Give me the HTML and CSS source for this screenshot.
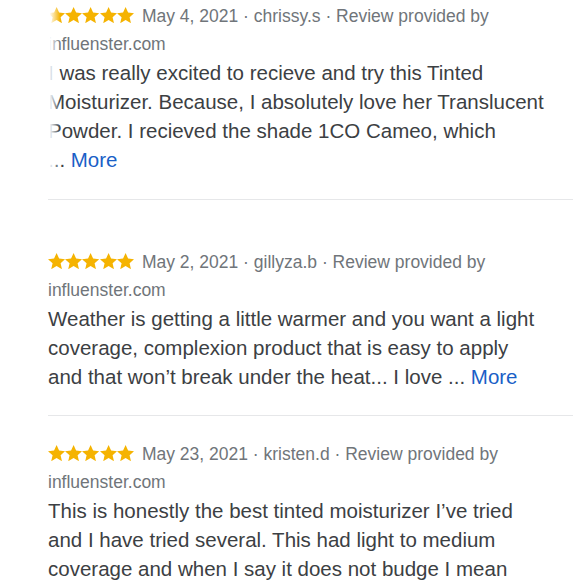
FILE: index.html
```html
<!DOCTYPE html>
<html lang="en">
<head>
<meta charset="utf-8">
<title>Reviews</title>
<link rel="stylesheet" href="styles.css">
</head>
<body>
<svg width="0" height="0" class="defs" aria-hidden="true">
  <defs>
    <symbol id="star" viewBox="1.6 1.9 20.8 19.6">
      <path d="M12 1.9l3.05 6.75 7.35.7-5.55 4.95 1.65 7.2L12 17.7l-6.5 3.8 1.65-7.2L1.6 9.35l7.35-.7z"/>
    </symbol>
  </defs>
</svg>
<main class="reviews">
  <article class="review review-first">
    <div class="meta">
      <span class="stars"><svg><use href="#star"/></svg><svg><use href="#star"/></svg><svg><use href="#star"/></svg><svg><use href="#star"/></svg><svg><use href="#star"/></svg></span>
      <span>May 4, 2021 · chrissy.s · Review provided by</span>
    </div>
    <div class="source">influenster.com</div>
    <p class="body"><span>I was really excited to recieve and try this Tinted Moisturizer. Because, I absolutely love her Translucent Powder. I recieved the shade 1CO Cameo, which</span><br><span>...</span> <a class="more" href="#">More</a></p>
    <div class="fade"></div>
  </article>
  <article class="review review-second">
    <div class="meta">
      <span class="stars"><svg><use href="#star"/></svg><svg><use href="#star"/></svg><svg><use href="#star"/></svg><svg><use href="#star"/></svg><svg><use href="#star"/></svg></span>
      <span>May 2, 2021 · gillyza.b · Review provided by</span>
    </div>
    <div class="source">influenster.com</div>
    <p class="body"><span>Weather is getting a little warmer and you want a light coverage, complexion product that is easy to apply</span><br><span>and that won’t break under the heat... I love ...</span> <a class="more" href="#">More</a></p>
  </article>
  <article class="review">
    <div class="meta">
      <span class="stars"><svg><use href="#star"/></svg><svg><use href="#star"/></svg><svg><use href="#star"/></svg><svg><use href="#star"/></svg><svg><use href="#star"/></svg></span>
      <span>May 23, 2021 · kristen.d · Review provided by</span>
    </div>
    <div class="source">influenster.com</div>
    <p class="body"><span>This is honestly the best tinted moisturizer I’ve tried and I have tried several. This had light to medium coverage and when I say it does not budge I mean</span></p>
  </article>
</main>
</body>
</html>
```
FILE: styles.css
```css
html, body {
  margin: 0;
  padding: 0;
  background: #ffffff;
}
body {
  font-family: "Liberation Sans", Arial, sans-serif;
  overflow: hidden;
  height: 580px;
}
.defs {
  position: absolute;
  width: 0;
  height: 0;
}
.reviews {
  padding: 0 7px 0 48px;
}
.review {
  position: relative;
  padding: 24px 0 24px;
  border-bottom: 1px solid #e6e7e9;
}
.review-first {
  padding-top: 2px;
  padding-bottom: 25px;
}
.review-second {
  padding-top: 48px;
}
.meta {
  display: flex;
  align-items: center;
  gap: 8px;
  font-size: 17.5px;
  line-height: 29px;
  color: #70757a;
  white-space: nowrap;
}
.stars {
  display: flex;
  align-items: center;
  margin-top: -3px;
}
.stars svg {
  width: 17.2px;
  height: 16.2px;
  fill: #f5b301;
}
.source {
  font-size: 17.5px;
  line-height: 27px;
  color: #70757a;
}
.body {
  margin: 0;
  font-size: 20.5px;
  line-height: 29px;
  color: #3c4043;
  width: 500px;
}
.more {
  color: #1a5fc7;
  text-decoration: none;
}
.fade {
  position: absolute;
  left: -4px;
  top: 0;
  width: 16px;
  height: 178px;
  background: linear-gradient(to right, #ffffff 35%, rgba(255, 255, 255, 0));
}
```
